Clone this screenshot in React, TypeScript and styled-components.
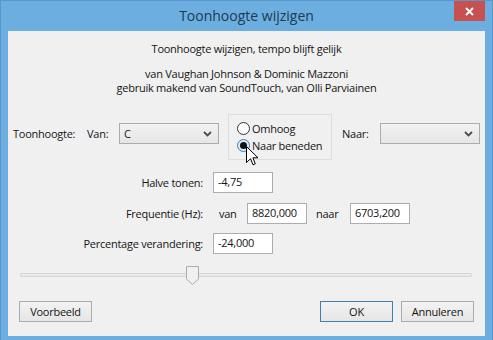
import React from 'react';
import styled, { createGlobalStyle } from 'styled-components';

const GlobalStyle = createGlobalStyle`
  html, body {
    margin: 0;
    padding: 0;
    background: #6caee0;
  }
  body {
    font-family: 'Open Sans', 'Noto Sans', sans-serif;
    font-size: 11px;
    letter-spacing: -0.25px;
    color: #151515;
  }
`;

const Window = styled.div`
  width: 493px;
  height: 340px;
  box-sizing: border-box;
  background: #6caee0;
  border: 1px solid #5a96cc;
  border-bottom: none;
  display: flex;
  flex-direction: column;
`;

const TitleBar = styled.div`
  height: 30px;
  position: relative;
  display: flex;
  align-items: center;
  justify-content: center;
`;

const Title = styled.div`
  font-size: 14px;
  letter-spacing: 0;
  color: #1d3b52;
  margin-top: -1px;
`;

const CloseButton = styled.div`
  position: absolute;
  top: 0;
  right: 7px;
  width: 31px;
  height: 20px;
  background: #c75050;
  display: flex;
  align-items: center;
  justify-content: center;
`;

const Client = styled.div`
  margin: 0 7px;
  height: 305px;
  background: #f0f0f0;
  display: flex;
  flex-direction: column;
`;

const Header = styled.div`
  text-align: center;
  padding-top: 11px;
  line-height: 14px;
`;

const HeaderLine = styled.div<{ $gap?: number }>`
  margin-top: ${(p) => p.$gap || 0}px;
`;

const PitchRow = styled.div`
  display: flex;
  align-items: flex-start;
  margin-top: 19px;
`;

const RowLabel = styled.span<{ $w: number; $ml?: number }>`
  width: ${(p) => p.$w}px;
  margin-left: ${(p) => p.$ml || 0}px;
  height: 21px;
  line-height: 21px;
  margin-top: 9px;
  white-space: nowrap;
`;

const Select = styled.div`
  width: 100px;
  height: 21px;
  box-sizing: border-box;
  margin-top: 9px;
  border: 1px solid #acacac;
  background: linear-gradient(#f2f2f2, #e6e6e6);
  display: flex;
  align-items: center;
  justify-content: space-between;
  padding: 0 6px 0 4px;
  svg {
    display: block;
  }
`;

const GroupBox = styled.div`
  position: relative;
  width: 104px;
  height: 46px;
  box-sizing: border-box;
  margin-left: 9px;
  border: 1px solid #dcdfe2;
  padding: 7px 0 0 8px;
  display: flex;
  flex-direction: column;
  gap: 4px;
`;

const RadioRow = styled.div`
  display: flex;
  align-items: center;
  height: 13px;
  gap: 2px;
`;

const RadioCircle = styled.span<{ $checked?: boolean }>`
  width: 13px;
  height: 13px;
  box-sizing: border-box;
  border-radius: 50%;
  border: 1px solid ${(p) => (p.$checked ? '#3c7fb1' : '#333')};
  background: ${(p) => (p.$checked ? '#dcecfc' : '#fff')};
  display: flex;
  align-items: center;
  justify-content: center;
  &::after {
    content: '';
    display: ${(p) => (p.$checked ? 'block' : 'none')};
    width: 7px;
    height: 7px;
    border-radius: 50%;
    background: #111;
  }
`;

const Cursor = styled.svg`
  position: absolute;
  left: 17px;
  top: 31px;
`;

const FieldRow = styled.div<{ $mt: number }>`
  display: flex;
  align-items: center;
  height: 21px;
  margin-top: ${(p) => p.$mt}px;
`;

const FieldLabel = styled.span`
  width: 195px;
  text-align: right;
  white-space: nowrap;
`;

const Word = styled.span<{ $ml: number; $w: number }>`
  margin-left: ${(p) => p.$ml}px;
  width: ${(p) => p.$w}px;
`;

const TextBox = styled.div<{ $ml: number }>`
  width: 60px;
  height: 21px;
  box-sizing: border-box;
  margin-left: ${(p) => p.$ml}px;
  border: 1px solid #abadb3;
  background: #fff;
  line-height: 18px;
  padding-left: 4px;
`;

const Slider = styled.div`
  position: relative;
  margin: 12px 0 0 12px;
  width: 452px;
  height: 19px;
`;

const Track = styled.div`
  position: absolute;
  left: 0;
  right: 0;
  top: 7px;
  height: 4px;
  box-sizing: border-box;
  border: 1px solid #d6d6d6;
  background: #e7eaea;
  border-radius: 1px;
`;

const Thumb = styled.svg`
  position: absolute;
  left: 166px;
  top: 0;
`;

const ButtonBar = styled.div`
  display: flex;
  margin: 16px 0 0 11px;
  padding-right: 11px;
`;

const Button = styled.div<{ $default?: boolean }>`
  width: 73px;
  height: 21px;
  box-sizing: border-box;
  border: 1px solid ${(p) => (p.$default ? '#3c7fb1' : '#acacac')};
  background: linear-gradient(#f2f2f2, #e6e6e6);
  display: flex;
  align-items: center;
  justify-content: center;
`;

const Spacer = styled.div`
  flex: 1;
`;

const Chevron = () => (
  <svg width="9" height="6" viewBox="0 0 9 6">
    <path d="M1 1 L4.5 4.5 L8 1" stroke="#4d4d4d" strokeWidth="1.8" fill="none" />
  </svg>
);

export default function App() {
  return (
    <>
      <GlobalStyle />
      <Window>
        <TitleBar>
          <Title>Toonhoogte wijzigen</Title>
          <CloseButton>
            <svg width="9" height="9" viewBox="0 0 9 9">
              <path d="M1 1 L8 8 M8 1 L1 8" stroke="#fff" strokeWidth="1.8" />
            </svg>
          </CloseButton>
        </TitleBar>
        <Client>
          <Header>
            <HeaderLine>Toonhoogte wijzigen, tempo blijft gelijk</HeaderLine>
            <HeaderLine $gap={11}>van Vaughan Johnson &amp; Dominic Mazzoni</HeaderLine>
            <HeaderLine>gebruik makend van SoundTouch, van Olli Parviainen</HeaderLine>
          </Header>

          <PitchRow>
            <RowLabel $w={74} $ml={5}>Toonhoogte:</RowLabel>
            <RowLabel $w={32}>Van:</RowLabel>
            <Select>
              <span>C</span>
              <Chevron />
            </Select>
            <GroupBox>
              <RadioRow>
                <RadioCircle />
                <span>Omhoog</span>
              </RadioRow>
              <RadioRow>
                <RadioCircle $checked />
                <span>Naar beneden</span>
              </RadioRow>
              <Cursor width="13" height="20" viewBox="0 0 13 20">
                <path
                  d="M0.5 0.5 L0.5 16.5 L4.5 12.7 L7 18.8 L9.3 17.8 L6.9 11.8 L12 11.8 Z"
                  fill="#fff"
                  stroke="#000"
                  strokeWidth="1"
                  strokeLinejoin="miter"
                />
              </Cursor>
            </GroupBox>
            <RowLabel $w={38} $ml={10}>Naar:</RowLabel>
            <Select>
              <span />
              <Chevron />
            </Select>
          </PitchRow>

          <FieldRow $mt={12}>
            <FieldLabel>Halve tonen:</FieldLabel>
            <TextBox $ml={10}>-4,75</TextBox>
          </FieldRow>
          <FieldRow $mt={10}>
            <FieldLabel>Frequentie (Hz):</FieldLabel>
            <Word $ml={16} $w={20}>van</Word>
            <TextBox $ml={8}>8820,000</TextBox>
            <Word $ml={9} $w={25}>naar</Word>
            <TextBox $ml={9}>6703,200</TextBox>
          </FieldRow>
          <FieldRow $mt={9}>
            <FieldLabel>Percentage verandering:</FieldLabel>
            <TextBox $ml={10}>-24,000</TextBox>
          </FieldRow>

          <Slider>
            <Track />
            <Thumb width="13" height="19" viewBox="0 0 13 19">
              <path
                d="M0.5 0.5 H12.5 V13 L6.5 18.5 L0.5 13 Z"
                fill="#f0f0f0"
                stroke="#acacac"
                strokeWidth="1"
              />
            </Thumb>
          </Slider>

          <ButtonBar>
            <Button>Voorbeeld</Button>
            <Spacer />
            <Button $default>OK</Button>
            <Button style={{ marginLeft: 8 }}>Annuleren</Button>
          </ButtonBar>
        </Client>
      </Window>
    </>
  );
}
